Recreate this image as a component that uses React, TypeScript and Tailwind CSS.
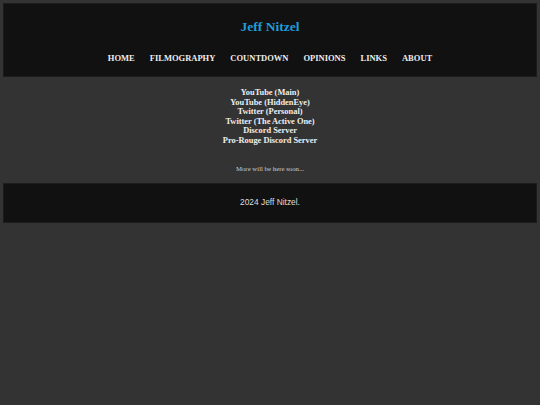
import React from "react";

const navItems = ["HOME", "FILMOGRAPHY", "COUNTDOWN", "OPINIONS", "LINKS", "ABOUT"];

const links = [
	"YouTube (Main)",
	"YouTube (HiddenEye)",
	"Twitter (Personal)",
	"Twitter (The Active One)",
	"Discord Server",
	"Pro-Rouge Discord Server",
];

export default function App() {
	return (
		<div className="min-h-[405px] bg-[#333333] pt-[3px] px-[3px] font-['Liberation_Serif',serif]">
			{/* Шапка */}
			<header className="bg-[#111111] border border-[#1c1c1c] pt-[15px] pb-[13px] text-center">
				<h1 className="text-[13.5px] leading-[16px] font-bold text-[#1e9cd8]">Jeff Nitzel</h1>
				<nav className="mt-[18px] flex justify-center gap-[15px]">
					{navItems.map((item) => (
						<a key={item} href="#" className="text-[8.5px] leading-[10px] font-bold text-[#eeeeee]">
							{item}
						</a>
					))}
				</nav>
			</header>

			{/* Ссылки */}
			<main className="pt-[11px] pb-[10px] text-center">
				<div className="flex flex-col items-center">
					{links.map((l) => (
						<a key={l} href="#" className="text-[8.4px] leading-[9.6px] font-bold text-[#eeeeee]">
							{l}
						</a>
					))}
				</div>
				<p className="mt-[19px] text-[6.8px] leading-[8px] text-[#cccccc]">More will be here soon...</p>
			</main>

			{/* Подвал */}
			<footer className="bg-[#111111] border border-[#1c1c1c] h-[40px] flex items-center justify-center">
				<p className="font-['Liberation_Sans',Arial,sans-serif] text-[8.4px] text-[#dddddd]">2024 Jeff Nitzel.</p>
			</footer>
		</div>
	);
}
